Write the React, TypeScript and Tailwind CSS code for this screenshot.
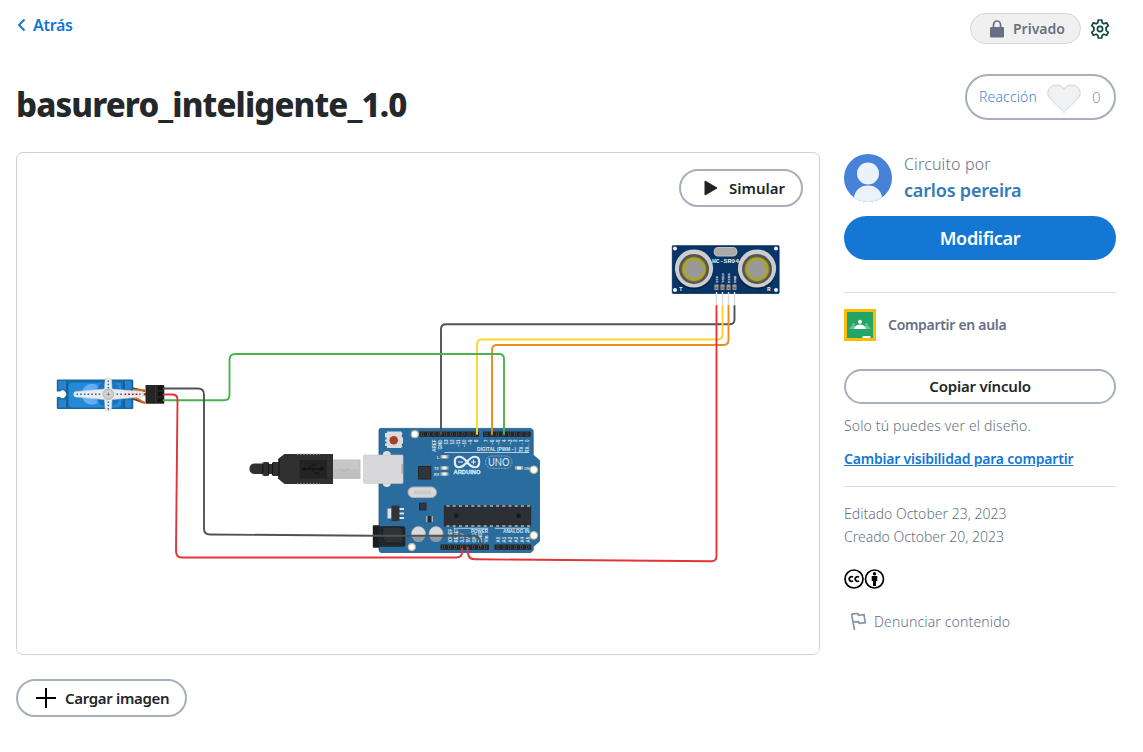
import React from "react";

const digitalPins = Array.from({ length: 10 }, (_, i) => 422.5 + i * 5.8);
const digitalPinsRight = Array.from({ length: 8 }, (_, i) => 486 + i * 5.85);
const powerPins = Array.from({ length: 8 }, (_, i) => 443.5 + i * 6);
const analogPins = Array.from({ length: 6 }, (_, i) => 498 + i * 5.9);
const chipPins = Array.from({ length: 14 }, (_, i) => 448 + i * 6.2);

const digitalLabels: [number, string][] = [
  [436, "AREF"], [442, "GND"], [448, "13"], [454, "12"], [460, "~11"], [466, "~10"], [472, "~9"], [478, "8"],
  [488, "7"], [494, "~6"], [500, "~5"], [506, "4"], [512, "~3"], [517, "2"], [523, "TX→1"], [529, "RX←0"],
];
const lowerLabels: [number, string][] = [
  [452, "IOREF"], [458, "RESET"], [464, "3.3V"], [470, "5V"], [476, "GND"], [482, "GND"], [488, "Vin"],
  [500, "A0"], [506, "A1"], [512, "A2"], [518, "A3"], [524, "A4"], [530, "A5"],
];

function Servo() {
  return (
    <g>
      <path d="M131 388l14 3M131 398l14 5" stroke="#7a3a22" strokeWidth="2" />
      <path d="M131 390l14 0M133 396l12 7" stroke="#e0752b" strokeWidth="1.5" />
      <path d="M131 394.3h15" stroke="#b01c1c" strokeWidth="2.4" />
      <rect x="56.800" y="379.500" width="76.500" height="29.500" rx="1" fill="#1767a3" />
      <rect x="58.500" y="381" width="73" height="26.500" fill="#1b74b6" />
      <path d="M58.500 381h8v8h-8zM58.500 400h8v7.500h-8zM125 381h6v8h-6zM125 400h6v7.500h-6z" fill="#2883cb" />
      <path d="M67 380v28.500M124 380v28.500" stroke="#145d94" strokeWidth="1.600" />
      <path d="M71 382h50l1 3v20l-3 3H71l-3-3v-20z" fill="#2489d6" stroke="#145d94" strokeWidth=".8" />
      <circle cx="92" cy="394.300" r="10.500" fill="#65aef7" />
      <circle cx="108" cy="394.300" r="12.500" fill="#1674bc" />
      <path d="M98 386a13 13 0 0 0 0 17" fill="none" stroke="#4c9fea" strokeWidth="2" />
      <path d="M56 391.500h4a3.700 3.700 0 1 1 0 5.500h-4z" fill="white" />
      <path d="M105 381a3.300 3.300 0 0 1 6.600 0l.4 8 29 2.500a2.800 2.800 0 0 1 0 5.600l-29 2.500-.4 8a3.300 3.300 0 0 1-6.600 0l-.5-8-28-2.500a2.800 2.800 0 0 1 0-5.600l28-2.500z" fill="#e9ebec" stroke="#c9cdd0" strokeWidth=".6" />
      <path d="M76.500 394.300h25" stroke="#246fa6" strokeWidth="1.500" strokeDasharray="1.600 2.100" />
      <path d="M116.500 394.300h7" stroke="#246fa6" strokeWidth="1.500" strokeDasharray="1.600 2.100" />
      <path d="M124.500 394.300h16" stroke="#981d2b" strokeWidth="1.600" strokeDasharray="1.800 1.900" />
      <path d="M108.300 380.500v8M108.300 401.500v8" stroke="#246fa6" strokeWidth="1.500" strokeDasharray="1.500 1.800" />
      <circle cx="108.300" cy="394.300" r="5.300" fill="#c9c9c9" stroke="#aaa" strokeWidth=".7" />
      <circle cx="108.300" cy="394.300" r="3.400" fill="#d8d8d8" />
      <path d="M106.300 394.300h4M108.300 392.300v4" stroke="#888" />
      <rect x="145.500" y="385" width="18.800" height="18.700" rx=".8" fill="#252525" />
      <path d="M158 386h6v4h-6zM158 392h6v4h-6zM158 398h6v4h-6z" fill="#131313" />
      <path d="M155.500 386v17" stroke="#363636" />
    </g>
  );
}

function Sensor() {
  return (
    <g>
      <rect x="672.300" y="245.700" width="106.800" height="47.700" rx=".8" fill="#073567" stroke="#03264e" strokeWidth=".8" />
      {[675, 776].map((x) => [248.600, 290].map((y) => <circle key={`${x}-${y}`} cx={x} cy={y} r="2" fill="#eff5fc" />))}
      <rect x="714.300" y="247.500" width="22.500" height="8.500" rx="4" fill="#aaa" stroke="#cbbfbb" strokeWidth="1.200" />
      <g fill="#e7edf4" fontFamily="Liberation Mono, monospace" fontWeight="700">
        <text x="712" y="263.200" fontSize="6" textLength="27" lengthAdjust="spacingAndGlyphs">HC-SR04</text>
        <text x="679" y="291" fontSize="6">T</text>
        <text x="767" y="291" fontSize="6">R</text>
        <text transform="translate(718.300 283) rotate(-90)" fontSize="4">VCC</text>
        <text transform="translate(724.200 283) rotate(-90)" fontSize="4">TRIG</text>
        <text transform="translate(730.200 283) rotate(-90)" fontSize="4">ECHO</text>
        <text transform="translate(736 283) rotate(-90)" fontSize="4">GND</text>
      </g>
      {[694, 757].map((x) => (
        <g key={x}>
          <circle cx={x} cy="270.500" r="19" fill="#08213e" />
          <circle cx={x} cy="268.500" r="19.100" fill="#cdcdd0" />
          <circle cx={x} cy="269" r="15" fill="#545454" />
          <circle cx={x} cy="269.300" r="12.700" fill="#777646" />
          <circle cx={x} cy="269.300" r="10.500" fill="#9a9b91" stroke="#aaa71c" strokeWidth="2.400" />
          <circle cx={x} cy="269.300" r="8.800" fill="#999" />
        </g>
      ))}
      {[716.500, 722.500, 728.500, 734.500].map((x) => (
        <g key={x}>
          <rect x={x - 2} y="284.500" width="4" height="5.500" fill="#a79a8d" />
          <path d={`M${x - 1} 287h2v2h-2z`} fill="#6d6259" />
          <path d={`M${x} 292v14`} stroke="#dadada" strokeWidth="1.500" />
        </g>
      ))}
    </g>
  );
}

function UsbPlug() {
  return (
    <g>
      <rect x="332" y="459.500" width="28.500" height="19.500" fill="#c0c0c0" />
      <path d="M333 461h26v8h-26z" fill="#c7c7c7" />
      <path d="M340 469l4 2 5-2" fill="none" stroke="#b2b2b2" />
      <path d="M254 463.500h8l1.500 1v-2.500h5v2h4v-2h6v-3.500l6-4.500h48.500v30H284.500l-6-5v-3h-6v-2h-4v2h-5v-2.500l-1.500.500h-8a5.300 5.300 0 0 1 0-10.500z" fill="#303030" />
      <path d="M263 462.500v13M268.500 463v12M272.500 463v12M279 459v20" stroke="#171717" strokeWidth="1.200" />
      <path d="M297 454h23M297 484h23" stroke="#bbb" strokeWidth="1.600" strokeDasharray="1.200 2" />
      <rect x="299.500" y="460" width="27.500" height="18.500" fill="#232323" />
      <g stroke="#111" fill="none">
        <path d="M303 469h18M308 469l4-4h4M312 469l3 4h4" />
        <path d="M321 467l3 2-3 2z" fill="#111" />
        <circle cx="304" cy="469" r="1" fill="#111" />
      </g>
    </g>
  );
}

function Arduino() {
  return (
    <g>
      <path d="M379.800 428.400H531l2.200 2v24.500l6.300 5.600v80.700l-6.300 5.500v3.500l-2.200 2.300H380.800l-1.800-1.700V430.100z" fill="#2b6c9f" stroke="#205b8a" strokeWidth=".8" />
      <path d="M385 433h2v-1.500h14l1.500 2-1 2.500 1.500 2v5l-1.500 2 1 1.500-1.500 1.500h-14V446h-2v-2.500h1.500v-2H385v-2h1.500v-2H385z" fill="#dadbdc" />
      <circle cx="393.700" cy="440.200" r="4.300" fill="#a84329" />
      <circle cx="386.800" cy="455" r="4" fill="#ddd" />
      <circle cx="386.800" cy="483" r="4" fill="#ddd" />
      <rect x="363.500" y="455" width="39.500" height="28.500" rx="1" fill="#d8d8da" stroke="#cacaca" strokeWidth=".6" />
      <path d="M402.300 464v10" stroke="#aaa" strokeWidth="1.600" />
      <g fill="#fff" stroke="#c1ba98" strokeWidth="1.200">
        <circle cx="414.800" cy="434.200" r="3.500" />
        <circle cx="533.800" cy="469.700" r="3.700" />
        <circle cx="533.800" cy="535.400" r="3.700" />
        <circle cx="411.800" cy="547.100" r="3.500" />
      </g>
      <g fill="#242729">
        <rect x="419.500" y="431.500" width="59.500" height="5.300" />
        <rect x="483" y="431.500" width="47.700" height="5.300" />
        <rect x="440.500" y="544.500" width="48.500" height="5.300" />
        <rect x="494.500" y="544.500" width="36.700" height="5.300" />
      </g>
      <g fill="#0d1115">
        {[...digitalPins, ...digitalPinsRight].map((x) => <rect key={x} x={x - 1} y="433" width="2" height="2.500" stroke="#5e6265" strokeWidth=".6" />)}
        {[...powerPins, ...analogPins].map((x) => <rect key={x} x={x - 1} y="546" width="2" height="2.500" stroke="#5e6265" strokeWidth=".6" />)}
      </g>
      <g fill="#d8e4ed" fontFamily="Liberation Sans, sans-serif" fontWeight="700" fontSize="4.500">
        {digitalLabels.map(([x, label]) => <text key={x} textAnchor="end" transform={`translate(${x} 439.500) rotate(-90)`}>{label}</text>)}
        {lowerLabels.map(([x, label]) => <text key={x} transform={`translate(${x} 542.500) rotate(-90)`}>{label}</text>)}
        <text x="477" y="450.500" fontSize="5" textLength="39" lengthAdjust="spacingAndGlyphs">DIGITAL (PWM ~)</text>
        <text x="453.500" y="474" fontSize="5.500" textLength="27" lengthAdjust="spacingAndGlyphs" stroke="#d8e4ed" strokeWidth=".3">ARDUINO</text>
        <text x="471" y="533" fontSize="5" textLength="17" lengthAdjust="spacingAndGlyphs">POWER</text>
        <text x="503" y="533" fontSize="5" textLength="26.500" lengthAdjust="spacingAndGlyphs">ANALOG IN</text>
        <text x="437" y="458.500" fontSize="3.800">L</text>
        <text x="434" y="469.500" fontSize="3.800">TX</text>
        <text x="434" y="475.500" fontSize="3.800">RX</text>
        <text x="524" y="469.500" fontSize="3.800">ON</text>
      </g>
      <path d="M444.500 452.500H529M458 528.300h30M495 528.300h34" stroke="#d5e4ef" strokeWidth=".8" />
      {[456.800, 468, 474].map((y) => (
        <g key={y}><rect x="440.500" y={y - 1.700} width="8" height="3.400" fill="#a5adb2" /><path d={`M442.500 ${y}h4`} stroke="#f2efdc" strokeWidth="3" /></g>
      ))}
      <rect x="515" y="466.200" width="8" height="3.400" fill="#a5adb2" /><path d="M517 468h4" stroke="#f2efdc" strokeWidth="3" />
      <path d="M467 462c-5-7-12.200-7-12.200 0s7.200 7 12.200 0c5-7 12.200-7 12.200 0s-7.200 7-12.200 0z" fill="none" stroke="#e4edf3" strokeWidth="2.200" />
      <path d="M458 462h5M471 462h5M473.500 459.500v5" stroke="#e4edf3" strokeWidth="1.200" />
      <rect x="485.500" y="456" width="26.500" height="12.300" rx="6" fill="none" stroke="#8bafc9" strokeWidth=".9" strokeDasharray="2 1" />
      <text x="488" y="466" fill="#e1eaf0" fontFamily="Lato, sans-serif" fontSize="10.500" textLength="21.500" lengthAdjust="spacingAndGlyphs">UNO</text>
      <rect x="418.500" y="466.500" width="12.300" height="12.500" fill="#32363a" stroke="#20262c" />
      <rect x="408" y="487" width="28.500" height="10.600" rx="5.300" fill="#d7d7d9" stroke="#aab2b8" />
      <path d="M414 492.300h17" stroke="#c9cacc" strokeWidth="4" />
      <rect x="419.500" y="503.200" width="6.500" height="6.700" fill="#32363a" stroke="#20262c" />
      <path d="M387.500 508.500h4v10h-4zM399 508h5v2h-5zM399 512.500h5v2h-5zM399 517h5v2h-5z" fill="#dce1e4" />
      <rect x="391.500" y="505.500" width="8" height="15.500" fill="#303438" />
      <path d="M426 516h2v6h-2zM431 516h2v6h-2z" fill="#9fadb7" />
      <rect x="427.500" y="516" width="4" height="6.300" fill="#24292d" />
      <rect x="443.800" y="505.300" width="87.400" height="21.200" fill="#2c3034" />
      {chipPins.map((x) => <path key={x} d={`M${x - 1.500} 506h3M${x - 1.500} 526h3`} stroke="#adb4b8" strokeWidth="1.600" />)}
      <circle cx="456.300" cy="515.700" r="2.300" fill="#17191b" /><circle cx="518.800" cy="515.700" r="2.300" fill="#17191b" />
      {[418.500, 436].map((x) => (
        <g key={x}>
          <circle cx={x} cy="533.600" r="7" fill="#d8d9dc" stroke="#b8b9aa" strokeWidth=".7" />
          <path d={`M${x - 6.500} 535.600h13a6.500 6.500 0 0 1-13 0`} fill="#8e9ba4" />
        </g>
      ))}
      <rect x="372.800" y="525.200" width="7" height="22.500" rx="1" fill="#181d21" />
      <rect x="378.500" y="526.200" width="26.800" height="20.500" rx="2" fill="#22272b" />
      <path d="M383 527h17l3 2v14H386c-4-2-4-12-3-16z" fill="#2d3236" stroke="#171b1f" strokeWidth=".7" />
    </g>
  );
}

function Circuit() {
  return (
    <svg width="802" height="501" viewBox="17 153 802 501" fill="none" aria-label="Circuito">
      <Servo />
      <Sensor />
      <UsbPlug />
      <Arduino />
      <g strokeWidth="1.900" strokeLinecap="round" strokeLinejoin="round">
        <path d="M734.500 306v13.500q0 4.800-5 4.800H446q-5 0-5 5V434" stroke="#505356" />
        <path d="M722.500 306v28.500q0 5-5 5H482q-5 0-5 5V434" stroke="#ffd52a" />
        <path d="M728.500 306v34q0 5-5 5H497q-5 0-5 5V434" stroke="#ec8a22" />
        <path d="M716.500 306v250q0 5.200-5 5.200l-236-1.900q-7 0-7.500-6l-.5-5.300" stroke="#e3343a" />
        <path d="M163.500 400.300H224q5.500 0 5.500-5.500V360q0-6 6-6H499q5 0 5 5V434" stroke="#4bb34b" />
        <path d="M163.500 388.500H198q6 0 6 6v134q0 6 6 6l163 1.200H474q6 0 6.500 8v2" stroke="#505356" />
        <path d="M163.500 394.500H172q5.500 0 5.500 5L176 551q0 6.500 6 6.500H456q6 0 6-5v-4" stroke="#e3343a" />
      </g>
    </svg>
  );
}

function Avatar() {
  return (
    <svg className="size-12 shrink-0" viewBox="0 0 48 48">
      <clipPath id="avatar"><circle cx="24" cy="24" r="24" /></clipPath>
      <g clipPath="url(#avatar)">
        <path fill="#4881d8" d="M0 0h48v48H0z" />
        <circle cx="24" cy="19.500" r="11" fill="#eaf2fc" />
        <path d="M9.500 48V45C11 36 16 31.500 24 31.500S37 36 38.500 45v3z" fill="#eaf2fc" />
      </g>
    </svg>
  );
}

function Aula() {
  return (
    <svg className="size-8 shrink-0" viewBox="0 0 32 32">
      <path fill="#fbbc05" d="M0 0h32v32H0z" />
      <path fill="#23a566" d="M3 3h26v26H3z" />
      <path d="M5.500 20v-1c1-2.500 5-2.500 7-1l7 0c2-1.500 6-1.500 7 1v1zM8 15.500a1.500 1.500 0 1 1 3 0 1.500 1.500 0 0 1-3 0M21 15.500a1.500 1.500 0 1 1 3 0 1.500 1.500 0 0 1-3 0" fill="#6ec49a" />
      <circle cx="16" cy="12.800" r="2" fill="white" /><path d="M10.500 20v-1.500c1.500-4 9.500-4 11 0V20z" fill="white" />
      <path fill="#f1f1f1" d="M18.500 27h8v2h-8z" />
    </svg>
  );
}

export default function App() {
  return (
    <main className="flex h-[752px] w-[1143px] gap-6 overflow-hidden bg-white pl-4 font-['Noto_Sans',sans-serif] text-[#667085]">
      <section className="w-[804px] shrink-0">
        <a className="flex h-[50px] items-center gap-[6px] text-[16px] font-semibold text-[#1477d3]">
          <svg width="11" height="14" viewBox="0 0 11 14" fill="none"><path d="M8.500 1.500L3 7l5.500 5.500" stroke="currentColor" strokeWidth="1.900" /></svg>
          <span className="tracking-[-0.3px]">Atrás</span>
        </a>
        <h1 className="flex h-[102px] items-center pt-[7px] text-[33px] font-extrabold leading-none text-[#25282b]">
          <span className="whitespace-nowrap tracking-[-0.88px]">basurero_inteligente_1.0</span>
        </h1>
        <div className="grid h-[503px] overflow-hidden rounded-[7px] border border-[#cbd2da]">
          <div className="col-start-1 row-start-1"><Circuit /></div>
          <button className="z-10 col-start-1 row-start-1 mr-4 mt-4 flex h-[38px] w-[124px] items-center justify-self-end rounded-full border-2 border-[#a5afbd] bg-white pl-[23px] text-[15px] font-semibold text-[#222529]">
            <svg className="mr-[11px]" width="14" height="16" viewBox="0 0 14 16"><path d="M1 1l12 7-12 7z" fill="#222" stroke="#222" strokeLinejoin="round" /></svg>
            <span>Simular</span>
          </button>
        </div>
        <button className="mt-6 flex h-[38px] w-[171px] items-center rounded-full border-2 border-[#a5afbd] pl-[18px] text-[15px] font-semibold text-[#222529]">
          <svg className="mr-[9px]" width="20" height="20" viewBox="0 0 20 20"><path d="M0 10h20M10 0v20" stroke="black" strokeWidth="2" /></svg>
          <span className="whitespace-nowrap tracking-[-0.32px]">Cargar imagen</span>
        </button>
      </section>

      <aside className="w-[272px] shrink-0 pt-[13px]">
        <div className="flex items-center justify-end gap-[9px] pr-[6px]">
          <span className="flex h-[31px] w-[111px] items-center rounded-full border border-[#d1d5db] bg-[#f0f0f0] pl-[19px] text-[14px] font-semibold">
            <svg className="mr-[9px]" width="14" height="18" viewBox="0 0 14 18"><path d="M3.500 8V4.500a3.500 3.500 0 0 1 7 0V8" fill="none" stroke="currentColor" strokeWidth="1.700" /><rect y="7" width="14" height="10.500" rx="1.200" fill="currentColor" /></svg>
            <span>Privado</span>
          </span>
          <svg width="20" height="20" viewBox="0 0 20 20" fill="none" stroke="#14463f" strokeWidth="1.700" strokeLinejoin="round">
            <path d="M8.300 1h3.400l.5 2.800 1.700 1 2.700-1 1.700 2.900-2.200 1.900v2.800l2.200 1.900-1.700 2.900-2.700-1-1.700 1-.5 2.800H8.300l-.5-2.800-1.700-1-2.700 1-1.700-2.900 2.200-1.900V8.600L1.700 6.700l1.700-2.900 2.700 1 1.700-1z" />
            <circle cx="10" cy="10" r="2.600" />
          </svg>
        </div>
        <div className="ml-auto mt-[30px] flex h-[46px] w-[151px] items-center rounded-full border-2 border-[#a5afbd] pl-[12px] text-[14px] font-light text-[#4881d8]">
          <span className="-mt-[2px] w-[68px] tracking-[0.15px]">Reacción</span>
          <svg className="mt-1" width="34" height="30" viewBox="0 0 34 30"><path d="M17 28.500L3 14.500C-1 10 1 4 5 2c4-2 10-1 12 3 2-4 8-5 12-3s6 8 2 12.500z" fill="#f0f1f3" stroke="#d0d2d5" /></svg>
          <span className="ml-[11px] text-[15px] text-[#8c95a3]">0</span>
        </div>
        <div className="mt-[34px] flex h-12 gap-3">
          <Avatar />
          <div className="whitespace-nowrap leading-[26px]">
            <p className="-mt-[3px] text-[16px] font-light tracking-[0.15px]">Circuito por</p>
            <p className="text-[18px] font-semibold tracking-[-0.18px] text-[#337ab7]">carlos pereira</p>
          </div>
        </div>
        <button className="mt-[14px] flex h-11 w-full items-center justify-center rounded-full bg-[#1477d3] text-[18px] font-semibold text-white"><span className="tracking-[-0.3px]">Modificar</span></button>
        <div className="mt-8 border-t border-[#dcdcdc] pt-4">
          <div className="flex items-center gap-3 text-[14px] font-semibold"><Aula /><span className="-mt-[2px] tracking-[-0.3px]">Compartir en aula</span></div>
          <button className="mt-7 flex h-[35px] w-full items-center justify-center rounded-full border-2 border-[#a5afbd] text-[15px] font-semibold text-[#222529]"><span className="tracking-[-0.2px]">Copiar vínculo</span></button>
          <p className="mt-[10px] h-6 whitespace-nowrap text-[14px] font-light leading-6 tracking-[0.15px]">Solo tú puedes ver el diseño.</p>
          <a className="mt-[9px] block h-6 whitespace-nowrap text-[14px] font-semibold leading-6 tracking-[-0.2px] text-[#1477d3] underline">Cambiar visibilidad para compartir</a>
        </div>
        <div className="mt-[15px] border-t border-[#dcdcdc] pt-[15px] text-[14px] font-light leading-[23px]">
          <p>Editado October 23, 2023</p>
          <p>Creado October 20, 2023</p>
          <svg className="mt-[21px]" width="42" height="20" viewBox="0 0 42 20" fill="none" stroke="black">
            <circle cx="10" cy="10" r="9" strokeWidth="1.700" /><circle cx="30.500" cy="10" r="9" strokeWidth="1.700" />
            <path d="M9 8.200a2.300 2.300 0 1 0 0 3.600M15 8.200a2.300 2.300 0 1 0 0 3.600" strokeWidth="1.700" />
            <circle cx="30.500" cy="4.800" r="1.700" fill="black" stroke="none" /><path d="M27.700 7h5.600v5H32v5h-3v-5h-1.300z" fill="black" stroke="none" />
          </svg>
          <div className="mt-[21px] flex items-center gap-[8px] pl-[6px]">
            <svg width="16" height="19" viewBox="0 0 16 19" fill="none" stroke="#8993a5" strokeWidth="1.700"><path d="M1.500 1.500L4.500 18M1.500 2.500c2-1 4-1 6.500-.8l.5 1.600 5.500-.6 1.300 8-6.300.6-.5-1.700-6 .6" /></svg>
            <span className="whitespace-nowrap tracking-[0.15px]">Denunciar contenido</span>
          </div>
        </div>
      </aside>
    </main>
  );
}
